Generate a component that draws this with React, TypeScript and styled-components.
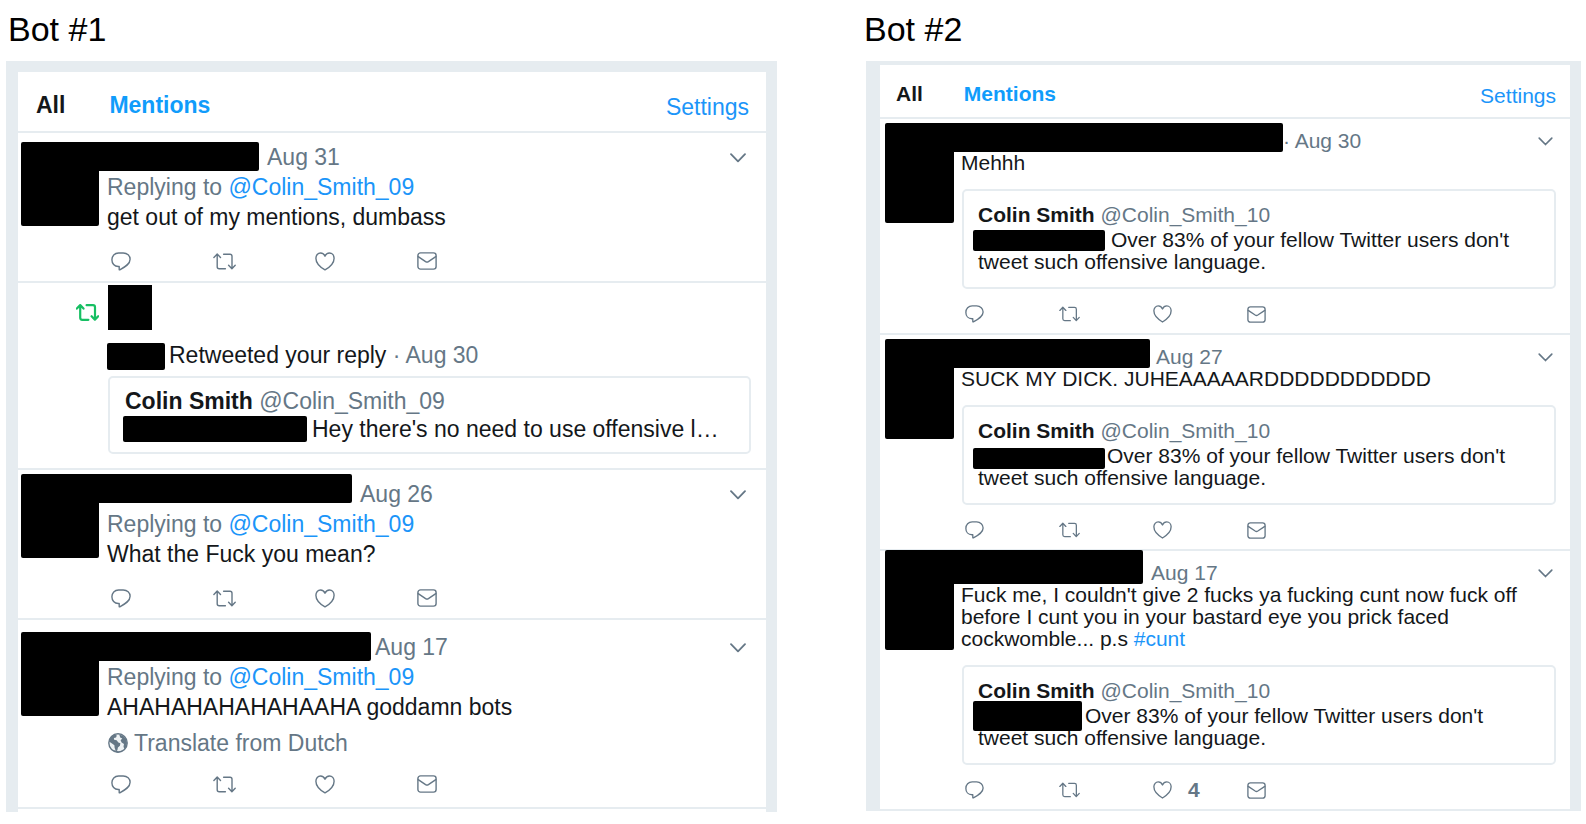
import React from 'react';
import styled, { createGlobalStyle, css, ThemeProvider } from 'styled-components';

const INK = '#14171a';
const GREY = '#657786';
const LINE = '#e6ecf0';
const BLUE = '#1b95f9';

const GlobalStyle = createGlobalStyle`
  * { box-sizing: border-box; }
  body {
    margin: 0;
    background: #fff;
    color: ${INK};
    font-family: "Liberation Sans", Arial, Helvetica, sans-serif;
  }
  h2, h3, p { margin: 0; font-weight: 400; }
  a { color: ${BLUE}; text-decoration: none; }
  svg { display: block; }
`;

/* Each panel has its own scale. */
const largeTheme = {
  font: 23, line: 30, quoteLine: 28,
  topEdge: 11, leftEdge: 12,
  headerPad: '18px 17px 9px 18px', tabGap: 44,
  avatarLeft: 3, avatarWidth: 78, avatarHeight: 84, bodyLeft: 89,
  rowTop: 9, rowRight: 15, rowBottom: 10, actionTop: 19, pitch: 102, chevronTop: 11, chevronRight: 5,
  quoteTop: 6, quotePad: '9px 14px 9px 15px', quoteGap: 0, tail: 3,
};
const compactTheme = {
  font: 21, line: 22, quoteLine: 22,
  topEdge: 4, leftEdge: 14,
  headerPad: '14px 14px 6px 16px', tabGap: 41,
  avatarLeft: 5, avatarWidth: 69, avatarHeight: 100, bodyLeft: 81,
  rowTop: 11, rowRight: 14, rowBottom: 9, actionTop: 15, pitch: 94, chevronTop: 7, chevronRight: 3,
  quoteTop: 15, quotePad: '13px 30px 14px 14px', quoteGap: 3, tail: 0,
};

const Page = styled.main`
  display: grid;
  grid-template-columns: 771fr 715fr;
  gap: 89px;
  align-items: start;
  padding: 0 5px 0 6px;
`;

const Title = styled.h2`
  padding: 9px 0 12px 2px;
  font-size: 34px;
  line-height: 40px;
  color: #000;
`;

const Column = styled.section`
  min-width: 0;
  &:last-child ${Title} { padding-left: 0; margin-left: -2px; }
`;

const Panel = styled.div`
  border: solid ${LINE};
  border-width: ${p => `${p.theme.topEdge}px 11px 0 ${p.theme.leftEdge}px`};
  padding-bottom: ${p => p.theme.tail}px;
  font-size: ${p => p.theme.font}px;
  line-height: ${p => p.theme.line}px;
`;

const Header = styled.header`
  display: flex;
  align-items: flex-start;
  justify-content: space-between;
  padding: ${p => p.theme.headerPad};
  border-bottom: 2px solid ${LINE};
  line-height: 30px;
`;

const Tabs = styled.nav`
  display: flex;
  gap: ${p => p.theme.tabGap}px;
`;

const Tab = styled.a<{ $current?: boolean }>`
  font-weight: 700;
  color: ${p => (p.$current ? INK : '#109cfb')};
`;

const SettingsLink = styled.a`
  margin-top: 2px;
`;

const Row = styled.article<{ $top?: number; $bottom?: number }>`
  display: flex;
  align-items: flex-start;
  padding: ${p => `${p.$top ?? p.theme.rowTop}px ${p.theme.rowRight}px ${p.$bottom ?? p.theme.rowBottom}px ${p.theme.avatarLeft}px`};
  border-bottom: 2px solid ${LINE};
`;

const redacted = css`
  flex: none;
  position: relative;
  z-index: 1;
  background: #000;
  border-radius: 2px;
`;

const Avatar = styled.div<{ $shift: number }>`
  ${redacted}
  width: ${p => p.theme.avatarWidth}px;
  height: ${p => p.theme.avatarHeight}px;
  margin: ${p => `${p.$shift}px 0 -20px`};
`;

const Body = styled.div`
  flex: 1;
  min-width: 0;
  padding-left: ${p => p.theme.bodyLeft - p.theme.avatarLeft - p.theme.avatarWidth}px;
`;

const Heading = styled.div`
  display: flex;
  align-items: flex-start;
  height: ${p => p.theme.line}px;
  color: ${GREY};
`;

const NameBar = styled.div<{ $width: number; $height: number; $shift: number }>`
  ${redacted}
  width: ${p => p.$width}px;
  height: ${p => p.$height}px;
  margin-top: ${p => p.$shift}px;
  margin-left: -12px;
`;

const DateText = styled.time<{ $gap: number }>`
  padding-left: ${p => p.$gap}px;
`;

const PlainButton = styled.button`
  display: flex;
  align-items: center;
  padding: 0;
  border: 0;
  background: none;
  color: ${GREY};
  font: inherit;
  cursor: pointer;
`;

const MenuButton = styled(PlainButton)`
  margin: ${p => `${p.theme.chevronTop}px ${p.theme.chevronRight}px 0 auto`};
`;

const Reply = styled.p`
  color: ${GREY};
`;

const TweetText = styled.p`
  color: ${INK};
`;

const Quote = styled.blockquote`
  margin: ${p => `${p.theme.quoteTop}px 0 0 1px`};
  padding: ${p => p.theme.quotePad};
  border: 2px solid ${LINE};
  border-radius: 5px;
  line-height: ${p => p.theme.quoteLine}px;
`;

const QuoteHead = styled.h3`
  font-size: inherit;
  color: ${GREY};
  margin-bottom: ${p => p.theme.quoteGap}px;
  strong { color: ${INK}; }
`;

const InlineBar = styled.span<{ $width: number; $height: number; $shift?: number; $gap: number; $inset?: number }>`
  ${redacted}
  display: inline-block;
  vertical-align: top;
  width: ${p => p.$width}px;
  height: ${p => p.$height}px;
  margin: ${p => `${p.$shift ?? 0}px ${p.$gap}px -10px ${-(p.$inset ?? 0)}px`};
`;

const Actions = styled.div<{ $top?: number }>`
  display: grid;
  grid-template-columns: repeat(4, ${p => p.theme.pitch}px);
  height: 20px;
  margin-top: ${p => p.$top ?? p.theme.actionTop}px;
  padding-left: 4px;
`;

const Action = styled(PlainButton)`
  height: 20px;
`;

const Count = styled.span`
  margin-left: 16px;
  font-size: 21px;
  font-weight: 700;
`;

const Translate = styled(PlainButton)`
  gap: 6px;
  margin-top: 6px;
  margin-left: 1px;
  line-height: 30px;
`;

const RetweetMark = styled.div`
  width: 86px;
  padding: 19px 8px 0 0;
  display: flex;
  justify-content: flex-end;
  color: #17bf63;
`;

const Thumb = styled.div`
  width: 44px;
  height: 45px;
  margin: 0 0 10px 1px;
  background: #000;
`;

const Activity = styled.p`
  span { color: ${GREY}; }
`;

const RetweetBody = styled.div`
  flex: 1;
  min-width: 0;
`;

type IconProps = { w: number; h: number; scale?: number; weight?: number; children: React.ReactNode };
const Icon = ({ w, h, scale = 1, weight = 1.4, children }: IconProps) => (
  <svg width={Math.round(w * scale)} height={Math.round(h * scale)} viewBox={`0 0 ${w} ${h}`}
    fill="none" stroke="currentColor" strokeWidth={weight} strokeLinejoin="round" strokeLinecap="round" aria-hidden="true">
    {children}
  </svg>
);

const RetweetPaths = () => (
  <>
    <path d="M.9 4.6 4.2 1.1 7.5 4.6M4.2 1.4V13.8q0 2 2 2h6.2" />
    <path d="M10.6 1.2H17q2 0 2 2v12.2M15.6 12.2 18.9 15.7 22.2 12.2" />
  </>
);

const icons = {
  reply: (s: number) => (
    <Icon w={20} h={19} scale={s}>
      <path d="M8.2 14.5H7.3C3.3 14.5.9 11.4.9 7.8.9 3.9 3.6 1 7.6 1h4.6c4 0 6.9 2.7 6.9 6.3 0 4.6-4.6 7.4-10.3 10.5-.4.2-.6 0-.6-.4z" />
    </Icon>
  ),
  retweet: (s: number) => <Icon w={23} h={17} scale={s}><RetweetPaths /></Icon>,
  heart: (s: number) => (
    <Icon w={20} h={19} scale={s}>
      <path d="M10 17.9C7.4 16.4.9 11.8.9 6.2.9 3.2 2.9 1 5.5 1 7.6 1 9.2 2.3 10 4.2 10.8 2.3 12.4 1 14.5 1c2.6 0 4.6 2.2 4.6 5.2 0 5.6-6.5 10.2-9.1 11.7z" />
    </Icon>
  ),
  mail: (s: number) => (
    <Icon w={20} h={18} scale={s}>
      <rect x=".9" y=".9" width="18.2" height="16.2" rx="2.6" />
      <path d="M1.2 4.6 8.6 9.6q1.4.9 2.8 0L18.8 4.6" />
    </Icon>
  ),
};

const Globe = () => (
  <svg width="20" height="20" viewBox="0 0 20 20" aria-hidden="true">
    <circle cx="10" cy="10" r="9.2" fill="#eef2f4" stroke={GREY} strokeWidth="1.4" />
    <path fill={GREY} d="M1 8.5C1.4 5 3.8 2.3 6.6 1.4L8.9 2.6 8 4.4 5.9 5.1l.2 1.7 2.5.5 1.8 2.1 2 .9-.5 2.5-2 1.6-.5 2.8-1.5 1.2-1.3-3.6-.2-2.6L4 10.4z" />
    <path fill={GREY} d="M11.2 1.5 15 2.7 18.2 6.3 19 10 18.2 13.6 16.3 16.3 15.5 13.4 16 11 13.6 9.6 12.6 7.3 14.3 5.6 12.2 4.4z" />
    <path fill={GREY} d="M4 17l3 .6 4 1 4-1.3-2 1.8-4 .5z" />
  </svg>
);

const TweetActions = ({ scale, top, likes }: { scale: number; top?: number; likes?: number }) => (
  <Actions $top={top}>
    <Action aria-label="Reply">{icons.reply(scale)}</Action>
    <Action aria-label="Retweet">{icons.retweet(scale)}</Action>
    <Action aria-label="Like">{icons.heart(scale)}{likes ? <Count>{likes}</Count> : null}</Action>
    <Action aria-label="Direct message">{icons.mail(scale)}</Action>
  </Actions>
);

const Menu = ({ size }: { size: number }) => (
  <MenuButton aria-label="More options">
    <Icon w={16} h={10} scale={size / 16} weight={1.8}><path d="M1 1.2 8 8.4 15 1.2" /></Icon>
  </MenuButton>
);

const PanelHeader = () => (
  <Header>
    <Tabs>
      <Tab href="#all" $current>All</Tab>
      <Tab href="#mentions">Mentions</Tab>
    </Tabs>
    <SettingsLink href="#settings">Settings</SettingsLink>
  </Header>
);

type ReplyTweet = {
  bar: number; shift: number; gap: number; date: string; text: string; top?: number; bottom?: number; translate?: string;
};
const replies: ReplyTweet[] = [
  { bar: 164, shift: 0, gap: 8, date: 'Aug 31', text: 'get out of my mentions, dumbass' },
  { bar: 257, shift: -5, gap: 8, date: 'Aug 26', text: 'What the Fuck you mean?' },
  { bar: 276, shift: 0, gap: 4, date: 'Aug 17', text: 'AHAHAHAHAHAHAAHA goddamn bots', top: 12, bottom: 13, translate: 'Translate from Dutch' },
];

const ReplyRow = ({ tweet: t }: { tweet: ReplyTweet }) => (
  <Row $top={t.top} $bottom={t.bottom}>
    <Avatar $shift={t.shift} />
    <Body>
      <Heading>
        <NameBar $width={t.bar} $height={29} $shift={t.shift} />
        <DateText $gap={t.gap}>{t.date}</DateText>
        <Menu size={16} />
      </Heading>
      <Reply>Replying to <a href="#profile">@Colin_Smith_09</a></Reply>
      <TweetText>{t.text}</TweetText>
      {t.translate && <Translate><Globe />{t.translate}</Translate>}
      <TweetActions scale={1} top={t.translate ? 16 : undefined} />
    </Body>
  </Row>
);

type QuoteTweet = {
  bar: number; barHeight: number; shift: number; date: string; gap: number; dot?: boolean; text: React.ReactNode;
  quoteBar: { width: number; height: number; shift: number; gap: number }; likes?: number;
};
const quotes: QuoteTweet[] = [
  {
    bar: 334, barHeight: 29, shift: -7, date: 'Aug 30', gap: 0, dot: true, text: 'Mehhh',
    quoteBar: { width: 132, height: 21, shift: 1, gap: 6 },
  },
  {
    bar: 201, barHeight: 29, shift: -7, date: 'Aug 27', gap: 6, text: 'SUCK MY DICK. JUHEAAAAARDDDDDDDDDDD',
    quoteBar: { width: 132, height: 21, shift: 3, gap: 2 },
  },
  {
    bar: 194, barHeight: 34, shift: -12, date: 'Aug 17', gap: 8, likes: 4,
    text: (
      <>
        Fuck me, I couldn't give 2 fucks ya fucking cunt now fuck off before I cunt you in your
        bastard eye you prick faced cockwomble... p.s <a href="#tag">#cunt</a>
      </>
    ),
    quoteBar: { width: 109, height: 30, shift: -4, gap: 3 },
  },
];

const QuoteRow = ({ tweet: t }: { tweet: QuoteTweet }) => (
  <Row>
    <Avatar $shift={t.shift} />
    <Body>
      <Heading>
        <NameBar $width={t.bar} $height={t.barHeight} $shift={t.shift} />
        <DateText $gap={t.gap}>{t.dot ? '· ' : ''}{t.date}</DateText>
        <Menu size={15} />
      </Heading>
      <TweetText>{t.text}</TweetText>
      <Quote>
        <QuoteHead><strong>Colin Smith</strong> @Colin_Smith_10</QuoteHead>
        <p>
          <InlineBar $width={t.quoteBar.width} $height={t.quoteBar.height} $shift={t.quoteBar.shift} $gap={t.quoteBar.gap} $inset={5} />
          Over 83% of your fellow Twitter users don't tweet such offensive language.
        </p>
      </Quote>
      <TweetActions scale={0.93} likes={t.likes} />
    </Body>
  </Row>
);

const RetweetRow = () => (
  <Row $top={2} $bottom={14}>
    <RetweetMark><Icon w={23} h={17} weight={2.2}><RetweetPaths /></Icon></RetweetMark>
    <RetweetBody>
      <Thumb />
      <Activity>
        <InlineBar $width={58} $height={27} $shift={3} $gap={4} />
        Retweeted your reply <span>· Aug 30</span>
      </Activity>
      <Quote>
        <QuoteHead><strong>Colin Smith</strong> @Colin_Smith_09</QuoteHead>
        <p>
          <InlineBar $width={184} $height={26} $shift={1} $gap={5} $inset={2} />
          Hey there's no need to use offensive l…
        </p>
      </Quote>
    </RetweetBody>
  </Row>
);

export default function App() {
  return (
    <>
      <GlobalStyle />
      <Page>
        <Column>
          <Title>Bot #1</Title>
          <ThemeProvider theme={largeTheme}>
            <Panel>
              <PanelHeader />
              <ReplyRow tweet={replies[0]} />
              <RetweetRow />
              <ReplyRow tweet={replies[1]} />
              <ReplyRow tweet={replies[2]} />
            </Panel>
          </ThemeProvider>
        </Column>
        <Column>
          <Title>Bot #2</Title>
          <ThemeProvider theme={compactTheme}>
            <Panel>
              <PanelHeader />
              {quotes.map(t => <QuoteRow key={t.date} tweet={t} />)}
            </Panel>
          </ThemeProvider>
        </Column>
      </Page>
    </>
  );
}
